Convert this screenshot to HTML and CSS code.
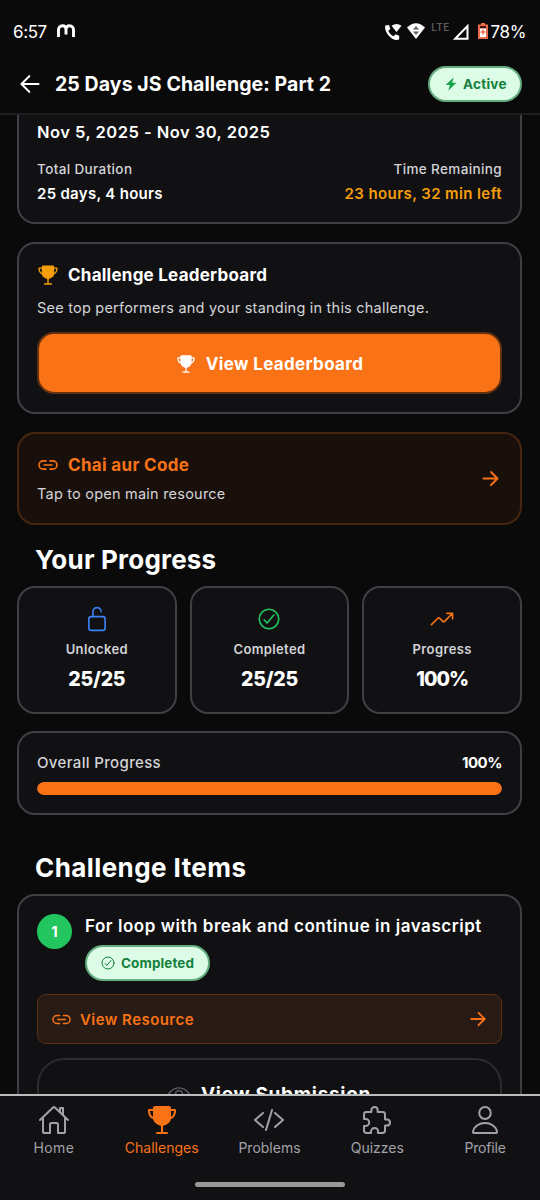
FILE: index.html
```
<!DOCTYPE html>
<html lang="en">
<head>
<meta charset="utf-8">
<title>25 Days JS Challenge: Part 2</title>
<link rel="stylesheet" href="styles.css">
</head>
<body>
<svg class="defs" viewBox="0 0 512 512">
  <symbol id="trophy" viewBox="0 0 512 512"><path fill="currentColor" fill-rule="evenodd" d="M464 80h-60a4 4 0 0 1-4-4V64a32 32 0 0 0-32-32H144a32 32 0 0 0-32 32v12a4 4 0 0 1-4 4H48a16 16 0 0 0-16 16v16c0 54.5 30 112.5 76.5 125.4a7.8 7.8 0 0 1 5.6 5.9c5.7 26.900 23.500 52.500 51.400 73.600 20.900 15.800 45.800 27.500 68.200 32.500a8 8 0 0 1 6.300 7.800V444a4 4 0 0 1-4 4h-60a16 16 0 0 0 0 32h160a16 16 0 0 0 0-32h-60a4 4 0 0 1-4-4v-86.800a8 8 0 0 1 6.300-7.800c22.400-5 47.300-16.700 68.200-32.500 27.900-21.100 45.700-46.700 51.400-73.600a7.800 7.800 0 0 1 5.600-5.900C450 224.500 480 166.500 480 112V96a16 16 0 0 0-16-16zM112 198a4 4 0 0 1-6 3.500c-10-6-17.700-15.300-22.100-21.900-11.900-17.700-19-40.700-19.800-63.600a4 4 0 0 1 4-4h40a4 4 0 0 1 4 4zM428 179.700c-4.400 6.600-12 15.900-22.100 21.900a4 4 0 0 1-6-3.500V116a4 4 0 0 1 4-4h40a4 4 0 0 1 4 4.200c-.8 22.900-7.900 45.900-19.900 63.500z"/></symbol>
  <symbol id="link" viewBox="0 0 512 512"><path class="line thick" d="M208 352h-64a96 96 0 0 1 0-192h64M304 160h64a96 96 0 0 1 0 192h-64M163 256h187"/></symbol>
  <symbol id="arrow" viewBox="0 0 512 512"><path class="line bold" d="M268 112l144 144-144 144M392 256H100"/></symbol>
  <symbol id="check" viewBox="0 0 512 512"><circle class="line" cx="256" cy="256" r="192"/><path class="line" d="M352 176L217.600 336 160 272"/></symbol>
</svg>

<div class="status">
  <span class="clock">6:57</span>
  <svg class="brand" viewBox="0 0 18 14"><path d="M1.500 13V6a4 4 0 0 1 4-4.300Q9 1.700 9 6v4.500V6q0-4.300 3.500-4.300a4 4 0 0 1 4 4.300v7"/></svg>
  <div class="signals">
    <svg class="call" viewBox="0 0 18 18"><path d="M1.200 2.500L5 2l1.300 4-2 1.800c1 2.600 2.700 4.400 5.300 5.500l1.900-2 3.700 1.400v3.600c-1.500 1-4 1-6.500-.4C4.500 13.500.3 8 1.200 2.500zM7.500 2.800Q12.500-1 17.500 2.800L12.500 9z"/></svg>
    <svg class="wifi" viewBox="0 0 18 16"><path fill="#fff" d="M0 4.500Q9-4 18 4.500L9 16z"/><path fill="#606060" d="M9 3l3 3.600H6zM9 12l3-3.600H6z"/></svg>
    <span class="lte">LTE</span>
    <svg class="cell" viewBox="0 0 16 16"><path d="M14.500 2v12.700H2.200z"/></svg>
    <svg class="battery" viewBox="0 0 10 16"><path fill="#ed6b4c" d="M3 0h4v1.500h3V16H0V1.500h3z"/><path fill="#41150d" d="M2 3h6v2.500H2z"/><path fill="#fff" d="M2 5.500h6V14H2z"/><path stroke="#ed6b4c" stroke-width="1.500" d="M5 6.500v5M2.500 9h5"/></svg>
    <span class="level">78%</span>
  </div>
</div>

<header class="header">
  <svg class="back" viewBox="0 0 512 512"><path class="line back-line" d="M244 400L100 256l144-144M120 256h292"/></svg>
  <h1 class="title">25 Days JS Challenge: Part 2</h1>
  <span class="pill active"><svg class="flash" viewBox="0 0 12 14"><path fill="#16a34a" d="M8.800.2L.6 8.100h4.200L3.200 13.800l8.200-8H7.200z"/></svg>Active</span>
</header>

<main class="content">
  <section class="card dates">
    <div class="range">Nov 5, 2025 - Nov 30, 2025</div>
    <div class="spread">
      <div><div class="caption">Total Duration</div><div class="value">25 days, 4 hours</div></div>
      <div class="end"><div class="caption">Time Remaining</div><div class="value left">23 hours, 32 min left</div></div>
    </div>
  </section>

  <section class="card leaders">
    <div class="heading"><svg class="cup amber"><use href="#trophy"/></svg><span class="heading-text">Challenge Leaderboard</span></div>
    <p class="desc">See top performers and your standing in this challenge.</p>
    <div class="button"><svg class="button-icon"><use href="#trophy"/></svg>View Leaderboard</div>
  </section>

  <section class="card main-link">
    <div>
      <div class="heading orange"><svg class="chain"><use href="#link"/></svg><span class="link-text">Chai aur Code</span></div>
      <p class="desc">Tap to open main resource</p>
    </div>
    <svg class="go orange"><use href="#arrow"/></svg>
  </section>

  <h2 class="section progress-title">Your Progress</h2>
  <div class="stats">
    <div class="card stat">
      <svg class="stat-icon blue" viewBox="0 0 512 512"><path class="line" d="M336 112a80 80 0 0 0-160 0v96"/><rect class="line" x="96" y="208" width="320" height="272" rx="48"/></svg>
      <span class="stat-label">Unlocked</span><span class="stat-value">25/25</span>
    </div>
    <div class="card stat">
      <svg class="stat-icon green"><use href="#check"/></svg>
      <span class="stat-label">Completed</span><span class="stat-value">25/25</span>
    </div>
    <div class="card stat">
      <svg class="stat-icon orange" viewBox="0 0 512 512"><path class="line" d="M352 144h112v112M48 368l121.400-121.400a32 32 0 0 1 45.200 0l50.800 50.800a32 32 0 0 0 45.200 0L460 148"/></svg>
      <span class="stat-label">Progress</span><span class="stat-value percent">100%</span>
    </div>
  </div>

  <section class="card overall">
    <div class="spread"><span class="overall-label">Overall Progress</span><span class="overall-value">100%</span></div>
    <div class="track"><div class="fill" style="width:100%"></div></div>
  </section>

  <h2 class="section items-title">Challenge Items</h2>
  <section class="card item">
    <div class="item-head">
      <span class="number">1</span>
      <div>
        <div class="item-title">For loop with break and continue in javascript</div>
        <span class="pill done"><svg class="done-icon"><use href="#check"/></svg>Completed</span>
      </div>
    </div>
    <div class="resource orange"><svg class="chain"><use href="#link"/></svg><span class="resource-text">View Resource</span><svg class="go"><use href="#arrow"/></svg></div>
    <div class="submission">
      <svg class="eye" viewBox="0 0 512 512"><path class="line" d="M255.700 112c-80.400 0-169.600 46.500-235.200 133.100a16 16 0 0 0-.3 21.100C77.500 343.400 161.500 400 255.700 400c93 0 179-56.800 236.300-134.200a16 16 0 0 0 .1-19.100C434.200 169.800 347.500 112 255.700 112z"/><circle class="line" cx="256" cy="256" r="80"/></svg>View Submission
    </div>
  </section>
</main>

<nav class="nav">
  <div class="tabs">
    <div class="tab"><svg class="tab-icon" viewBox="0 0 512 512"><path class="line" d="M80 212v236a16 16 0 0 0 16 16h96V328a24 24 0 0 1 24-24h80a24 24 0 0 1 24 24v136h96a16 16 0 0 0 16-16V212M480 256L266.900 52c-5-5.300-16.700-5.300-21.800 0L32 256M400 179V64h-48v69"/></svg><span class="tab-home">Home</span></div>
    <div class="tab orange"><svg class="tab-icon"><use href="#trophy"/></svg><span>Challenges</span></div>
    <div class="tab"><svg class="tab-icon" viewBox="0 0 512 512"><path class="line" d="M160 368L32 256l128-112M352 368l128-112-128-112M304 96l-96 320"/></svg><span>Problems</span></div>
    <div class="tab"><svg class="tab-icon" viewBox="0 0 512 512"><path class="line" d="M413.700 246.100H386a2 2 0 0 1-2-2v-77.200A38.900 38.900 0 0 0 345.100 128h-77.200a2 2 0 0 1-2-2V98.300c0-27.100-21.500-49.800-48.600-50.300a49.500 49.500 0 0 0-50.400 49.500V126a2 2 0 0 1-2 2H87.600A39.700 39.700 0 0 0 48 167.600V238a2 2 0 0 0 2 2h26.900c29.400 0 53.700 25.500 54.100 54.900.4 29.800-23.500 57.100-53.300 57.100H50a2 2 0 0 0-2 2v70.400A39.700 39.700 0 0 0 87.600 464H158a2 2 0 0 0 2-2v-20.900c0-30.300 24.800-56.400 55-57.100 30.100-.7 57 20.300 57 50.300V462a2 2 0 0 0 2 2h71.100A38.900 38.900 0 0 0 384 425.100v-78a2 2 0 0 1 2-2h28.500c27.600 0 49.500-22.700 49.500-50.400s-23.200-48.600-50.300-48.600z"/></svg><span>Quizzes</span></div>
    <div class="tab"><svg class="tab-icon" viewBox="0 0 512 512"><ellipse class="line" cx="256" cy="144" rx="92" ry="96"/><path class="line" d="M256 304c-87 0-175.300 48-191.600 138.600C62.400 453.500 68.600 464 80 464h352c11.400 0 17.600-10.500 15.700-21.400C431.300 352 343 304 256 304z"/></svg><span class="tab-profile">Profile</span></div>
  </div>
  <div class="handle"></div>
</nav>
</body>
</html>
```
FILE: styles.css
```
* { box-sizing: border-box; }
body {
  margin: 0;
  width: 540px;
  height: 1200px;
  display: flex;
  flex-direction: column;
  overflow: hidden;
  background: #0a0a0a;
  color: #fff;
  font-family: "Inter", sans-serif;
}
h1, h2, p { margin: 0; }
svg { display: block; flex: none; }
.defs { position: absolute; width: 0; height: 0; }
.line { fill: none; stroke: currentColor; stroke-width: 32; stroke-linecap: round; stroke-linejoin: round; }
.thick { stroke-width: 36; }
.bold { stroke-width: 42; }
.back-line { stroke-width: 38; }
.orange { color: #f97316; }
.amber { color: #f59e0b; }
.blue { color: #3b82f6; }
.green { color: #22c55e; }

/* Status bar */
.status { flex: none; height: 52px; padding: 11px 14px 0 13px; display: flex; align-items: center; }
.clock, .level { font-size: 17px; letter-spacing: -0.4px; }
.brand { width: 18px; height: 14px; margin-left: 10px; margin-top: -2px; }
.brand path { fill: none; stroke: #fff; stroke-width: 2.900; }
.signals { margin-left: auto; display: flex; align-items: center; }
.call { width: 18px; height: 18px; fill: #fff; }
.wifi { width: 18px; height: 16px; margin-left: 5px; margin-top: -2px; }
.lte { margin: -9px 3px 0 6px; font-size: 10px; font-weight: 600; letter-spacing: 0.300px; color: #5c5c5c; }
.cell { width: 16px; height: 16px; }
.battery { width: 10px; height: 16px; margin: -1px 3px 0 9px; }
.cell path { fill: none; stroke: #fff; stroke-width: 2; }

/* Screen header */
.header { flex: none; height: 63px; padding: 2px 18px 0 16px; display: flex; align-items: center; border-bottom: 2px solid #1e1e20; }
.back { width: 28px; height: 28px; margin-right: 11px; }
.title { font-size: 19.500px; font-weight: 700; line-height: 24px; letter-spacing: 0.080px; }
.pill { display: inline-flex; align-items: center; height: 36px; border: 2px solid #65ac7e; border-radius: 18px; background: #dcfce7; color: #15803d; font-weight: 700; font-size: 13.500px; }
.active { margin-left: auto; width: 94px; padding-left: 15px; gap: 6px; letter-spacing: 0.250px; }
.flash { width: 12px; height: 14px; }

/* Scrolling content */
.content { flex: 1; min-height: 0; overflow: hidden; display: flex; flex-direction: column; padding: 0 18px 0 17px; }
.card { flex: none; border: 2px solid #3f3f46; border-radius: 18px; background: #111113; }
.spread { display: flex; justify-content: space-between; }
.end { text-align: right; }
.dates { height: 109px; border-top: 0; border-radius: 0 0 18px 18px; padding: 6px 18px 0; }
.range { font-size: 16.500px; font-weight: 600; line-height: 22px; letter-spacing: 0.480px; }
.caption { margin-top: 17px; font-size: 13.500px; font-weight: 500; line-height: 18px; letter-spacing: 0.370px; color: #d4d4d8; }
.value { margin-top: 5px; font-size: 15px; font-weight: 600; line-height: 21px; letter-spacing: 0.300px; }
.left { color: #f59e0b; letter-spacing: 0.400px; }

.leaders { height: 172px; margin-top: 18px; padding: 20px 18px 0; }
.heading { display: flex; align-items: center; gap: 9px; height: 22px; }
.cup { width: 22px; height: 22px; }
.heading-text { font-size: 17px; font-weight: 700; letter-spacing: 0.240px; }
.desc { font-size: 14.500px; line-height: 20px; letter-spacing: 0.220px; color: #d4d4d8; }
.leaders .desc { margin-top: 12px; }
.button { margin-top: 14px; height: 62px; padding-top: 1px; border: 2px solid #63310f; border-radius: 17px; background: #f97316; display: flex; align-items: center; justify-content: center; gap: 10px; font-size: 17px; font-weight: 700; letter-spacing: 0.350px; }
.button-icon { width: 20px; height: 20px; }

.main-link { height: 93px; margin-top: 18px; padding: 0 18px; display: flex; align-items: center; justify-content: space-between; border-color: #47260f; background: #19100b; }
.chain { width: 22px; height: 22px; }
.link-text { font-size: 17px; font-weight: 700; letter-spacing: 0.340px; }
.main-link .desc { margin-top: 8px; }
.go { width: 23px; height: 23px; margin-top: -1px; }

.section { flex: none; padding-left: 18px; font-size: 26px; font-weight: 700; line-height: 32px; }
.progress-title { margin-top: 19px; letter-spacing: 0.200px; }
.stats { flex: none; margin-top: 10px; display: grid; grid-template-columns: repeat(3, 1fr); gap: 13px; }
.stat { height: 128px; padding-top: 20px; display: flex; flex-direction: column; align-items: center; }
.stat-icon { width: 26px; height: 26px; margin-top: -2px; }
.stat-label { margin-top: 7px; font-size: 13px; font-weight: 600; line-height: 20px; letter-spacing: 0.380px; color: #d4d4d8; }
.stat-value { margin-top: 7px; font-size: 19.500px; font-weight: 800; line-height: 26px; letter-spacing: -0.200px; }
.percent { letter-spacing: -0.950px; }

.overall { height: 84px; margin-top: 17px; padding: 19px 18px 0; }
.overall-label { font-size: 15px; font-weight: 500; line-height: 22px; letter-spacing: 0.350px; color: #d4d4d8; }
.overall-value { font-size: 15px; font-weight: 700; line-height: 22px; letter-spacing: -0.480px; }
.track { margin-top: 8px; height: 13px; border-radius: 7px; overflow: hidden; background: #27272a; }
.fill { height: 100%; border-radius: 7px; background: #f97316; }

.items-title { margin-top: 37px; letter-spacing: 0.420px; }
.item { height: 260px; margin-top: 10px; padding: 18px 18px 0; }
.item-head { display: flex; gap: 13px; }
.number { flex: none; width: 35px; height: 35px; border-radius: 50%; background: #22c55e; display: flex; align-items: center; justify-content: center; font-size: 15px; font-weight: 700; }
.item-title { font-size: 17px; font-weight: 600; line-height: 24px; letter-spacing: 0.530px; }
.done { width: 125px; margin-top: 7px; padding-left: 13px; gap: 5px; letter-spacing: 0.100px; }
.done-icon { width: 16px; height: 16px; }
.resource { margin-top: 13px; height: 50px; padding: 0 12px 0 13px; display: flex; align-items: center; border: 1px solid #5b3017; border-radius: 9px; background: #281a15; }
.resource .chain { width: 21px; height: 21px; }
.resource-text { margin-left: 8px; font-size: 15px; font-weight: 600; letter-spacing: 0.450px; }
.resource .go { width: 22px; height: 22px; margin-left: auto; }
.submission { margin-top: 14px; height: 72px; border: 2px solid #2c2c31; border-radius: 27px; display: flex; align-items: center; justify-content: center; gap: 11px; font-size: 19px; font-weight: 700; letter-spacing: 0.690px; }
.eye { width: 22px; height: 22px; color: #63636b; }

/* Bottom navigation */
.nav { flex: none; height: 106px; border-top: 2px solid #b9bdbc; background: #111113; display: flex; flex-direction: column; align-items: center; }
.tabs { width: 540px; padding-right: 1px; display: grid; grid-template-columns: repeat(5, 1fr); }
.tab { display: flex; flex-direction: column; align-items: center; font-size: 14px; color: #a1a1aa; padding-top: 8px; }
.tab.orange { color: #f97316; }
.tab-icon { width: 32px; height: 32px; }
.tab span { margin-top: 2px; line-height: 20px; }
.tab .tab-home { letter-spacing: 0.440px; }
.tab .tab-profile { letter-spacing: -0.200px; }
.handle { width: 150px; height: 5px; margin-top: 24px; border-radius: 3px; background: #999; }
```
